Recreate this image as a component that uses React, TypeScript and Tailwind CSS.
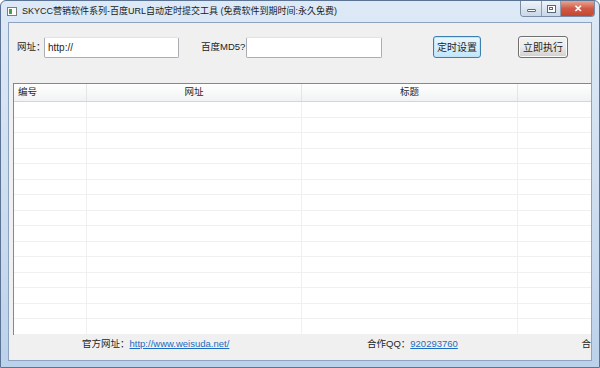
import React from 'react';

const font = "font-['Liberation_Sans','Noto_Sans_CJK_SC',sans-serif]";

function CaptionButtons() {
  return (
    <div className="flex h-[16px] self-start overflow-hidden rounded-b-[4px] border border-t-0 border-[#7b8ba1]">
      <div className="flex w-[21px] items-center justify-center border-r border-[#8e9cb0] bg-gradient-to-b from-[#eef3f9] to-[#c9d7e8]">
        <div className="mt-[4px] h-[3px] w-[9px] rounded-[1px] border border-[#5a6778] bg-white" />
      </div>
      <div className="flex w-[19px] items-center justify-center border-r border-[#8e9cb0] bg-gradient-to-b from-[#eef3f9] to-[#c9d7e8]">
        <div className="flex h-[8px] w-[9px] items-center justify-center border border-[#5a6778] bg-white">
          <div className="h-[3px] w-[4px] border border-[#5a6778]" />
        </div>
      </div>
      <div className="flex w-[33px] items-center justify-center bg-gradient-to-b from-[#e8a493] via-[#cf5a45] to-[#c4452f]">
        <span className="text-[10px] font-bold leading-none text-white">✕</span>
      </div>
    </div>
  );
}

function Button({ label, focused }: { label: string; focused?: boolean }) {
  return (
    <div
      className={
        'flex h-[22px] items-center justify-center rounded-[3px] border text-[10px] text-[#1e1e1e] ' +
        (focused
          ? 'border-[#3c7fb1] bg-gradient-to-b from-[#eaf6fd] via-[#d9f0fc] to-[#bee6fd] shadow-[inset_0_0_0_1px_#c3e4f7]'
          : 'border-[#707070] bg-gradient-to-b from-[#f2f2f2] via-[#ebebeb] to-[#cfcfcf] shadow-[inset_0_0_0_1px_#fbfbfb]')
      }
    >
      {label}
    </div>
  );
}

export default function App() {
  const rows = Array.from({ length: 15 });
  const cols = ['', '', '', ''];

  return (
    <div className={`${font} flex h-[368px] w-[600px] flex-col overflow-hidden rounded-t-[6px] border border-[#5d7394] bg-gradient-to-b from-[#dde9f6] via-[#cfdff0] to-[#bcd1ea] whitespace-nowrap`}>
      {/* Title bar */}
      <div className="flex h-[21px] shrink-0 items-center pl-[6px] pr-[4px]">
        <div className="flex h-[9px] w-[10px] items-center border border-[#7d7d7d] bg-white pl-[1px]">
          <div className="h-[5px] w-[3px] bg-[#3ea34a]" />
        </div>
        <div className="ml-[5px] flex-1 truncate text-[9px] text-[#1a1a1a]">
          SKYCC营销软件系列-百度URL自动定时提交工具 (免费软件到期时间:永久免费)
        </div>
        <CaptionButtons />
      </div>

      {/* Client */}
      <div className="flex min-h-0 flex-1 px-[7px] pb-[6px]">
        <div className="flex flex-1 flex-col overflow-hidden border border-[#8ea3c0] bg-[#f0f0f0] text-[9.5px] text-[#1e1e1e]">
          {/* Controls row */}
          <div className="mt-[13px] flex h-[22px] items-center">
            <span className="ml-[8px] w-[27px]">网址：</span>
            <div className="flex h-[21px] w-[135px] items-center rounded-[2px] border border-[#abadb3] border-t-[#e2e3ea] bg-white pl-[3px] text-[10px]">
              http://
            </div>
            <span className="ml-[22px] w-[45px]">百度MD5?</span>
            <div className="h-[21px] w-[136px] rounded-[2px] border border-[#abadb3] border-t-[#e2e3ea] bg-white" />
            <div className="ml-[51px] w-[48px]">
              <Button label="定时设置" focused />
            </div>
            <div className="ml-[37px] w-[50px]">
              <Button label="立即执行" />
            </div>
          </div>

          {/* Table */}
          <div className="ml-[4px] mt-[25px] h-[252px] border border-r-0 border-[#828790] bg-white">
            <div className="grid h-[18px] grid-cols-[73px_215px_216px_1fr] border-b border-[#d5d5d5] bg-gradient-to-b from-white to-[#f1f2f4]">
              <div className="flex items-center border-r border-[#e5e5e5] pl-[4px]">编号</div>
              <div className="flex items-center justify-center border-r border-[#e5e5e5]">网址</div>
              <div className="flex items-center justify-center border-r border-[#e5e5e5]">标题</div>
              <div />
            </div>
            {rows.map((_, i) => (
              <div key={i} className="grid h-[15.5px] grid-cols-[73px_215px_216px_1fr] border-b border-[#f0f0f0]">
                {cols.map((_, j) => (
                  <div key={j} className={j < 3 ? 'border-r border-[#f0f0f0]' : ''} />
                ))}
              </div>
            ))}
          </div>

          {/* Footer */}
          <div className="flex h-[19px] items-center overflow-hidden">
            <div className="ml-[73px] w-[287px]">
              <span>官方网址：</span>
              <span className="text-[#1c6cc1] underline">http://www.weisuda.net/</span>
            </div>
            <div className="w-[216px]">
              <span>合作QQ：</span>
              <span className="text-[#1c6cc1] underline">920293760</span>
            </div>
            <span>合</span>
          </div>
        </div>
      </div>
    </div>
  );
}
